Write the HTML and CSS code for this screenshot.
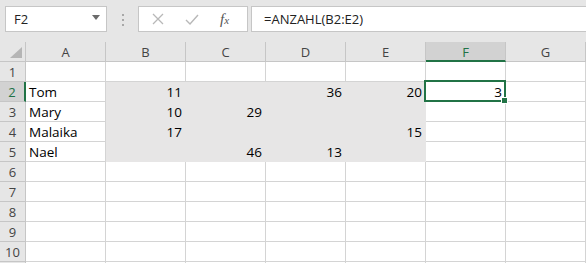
FILE: index.html
```html
<!DOCTYPE html>
<html lang="de">
<head>
    <meta charset="UTF-8">
    <title>ANZAHL</title>
    <link rel="stylesheet" href="styles.css">
</head>
<body>

    <!-- Bearbeitungsleiste -->
    <div class="formula-bar">
        <div class="name-box">
            <span>F2</span>
            <svg class="drop" width="8" height="5" viewBox="0 0 8 5"><path d="M0 0H8L4 5Z" fill="#6b6b6b"/></svg>
        </div>
        <div class="grip"><i></i><i></i><i></i></div>
        <div class="fx-buttons">
            <svg width="12" height="12" viewBox="0 0 12 12"><path d="M1 1L11 11M11 1L1 11" stroke="#b8b8b8" stroke-width="1.3" fill="none"/></svg>
            <svg width="14" height="11" viewBox="0 0 14 11"><path d="M1 6L5 10L13 1" stroke="#b8b8b8" stroke-width="1.4" fill="none"/></svg>
            <span class="fx">f<sub>x</sub></span>
        </div>
        <div class="formula">=ANZAHL(B2:E2)</div>
    </div>

    <!-- Tabellenblatt -->
    <div class="sheet">
        <div class="row head">
            <div class="rh corner">
                <svg width="12" height="11" viewBox="0 0 12 11"><path d="M12 0V11H0Z" fill="#b5b5b5"/></svg>
            </div>
            <div class="c">A</div>
            <div class="c">B</div>
            <div class="c">C</div>
            <div class="c">D</div>
            <div class="c">E</div>
            <div class="c sel">F</div>
            <div class="c">G</div>
        </div>
        <div class="row">
            <div class="rh">1</div>
            <div class="c"></div><div class="c"></div><div class="c"></div><div class="c"></div><div class="c"></div><div class="c"></div><div class="c"></div>
        </div>
        <div class="row">
            <div class="rh sel">2</div>
            <div class="c">Tom</div>
            <div class="c fill num">11</div>
            <div class="c fill num"></div>
            <div class="c fill num">36</div>
            <div class="c fill num">20</div>
            <div class="c num active">3<span class="handle"></span></div>
            <div class="c"></div>
        </div>
        <div class="row">
            <div class="rh">3</div>
            <div class="c">Mary</div>
            <div class="c fill num">10</div>
            <div class="c fill num">29</div>
            <div class="c fill num"></div>
            <div class="c fill num"></div>
            <div class="c"></div>
            <div class="c"></div>
        </div>
        <div class="row">
            <div class="rh">4</div>
            <div class="c">Malaika</div>
            <div class="c fill num">17</div>
            <div class="c fill num"></div>
            <div class="c fill num"></div>
            <div class="c fill num">15</div>
            <div class="c"></div>
            <div class="c"></div>
        </div>
        <div class="row">
            <div class="rh">5</div>
            <div class="c">Nael</div>
            <div class="c fill num"></div>
            <div class="c fill num">46</div>
            <div class="c fill num">13</div>
            <div class="c fill num"></div>
            <div class="c"></div>
            <div class="c"></div>
        </div>
        <div class="row">
            <div class="rh">6</div>
            <div class="c"></div><div class="c"></div><div class="c"></div><div class="c"></div><div class="c"></div><div class="c"></div><div class="c"></div>
        </div>
        <div class="row">
            <div class="rh">7</div>
            <div class="c"></div><div class="c"></div><div class="c"></div><div class="c"></div><div class="c"></div><div class="c"></div><div class="c"></div>
        </div>
        <div class="row">
            <div class="rh">8</div>
            <div class="c"></div><div class="c"></div><div class="c"></div><div class="c"></div><div class="c"></div><div class="c"></div><div class="c"></div>
        </div>
        <div class="row">
            <div class="rh">9</div>
            <div class="c"></div><div class="c"></div><div class="c"></div><div class="c"></div><div class="c"></div><div class="c"></div><div class="c"></div>
        </div>
        <div class="row">
            <div class="rh">10</div>
            <div class="c"></div><div class="c"></div><div class="c"></div><div class="c"></div><div class="c"></div><div class="c"></div><div class="c"></div>
        </div>
        <div class="row">
            <div class="rh"></div>
            <div class="c"></div><div class="c"></div><div class="c"></div><div class="c"></div><div class="c"></div><div class="c"></div><div class="c"></div>
        </div>
    </div>

</body>
</html>
```

FILE: styles.css
```css
/* Grundlayout */
body {
    margin: 0;
    width: 586px;
    height: 263px;
    overflow: hidden;
    background-color: #ffffff;
    font-family: "Open Sans", Arial, sans-serif;
}

/* Bearbeitungsleiste */
.formula-bar {
    display: flex;
    height: 42px;
    box-sizing: border-box;
    padding: 6px 0 0 5px;
    background-color: #e6e6e6;
}

.name-box {
    display: flex;
    align-items: center;
    justify-content: space-between;
    box-sizing: border-box;
    width: 102px;
    height: 26px;
    padding: 0 6px 0 8px;
    background-color: #ffffff;
    border: 1px solid #c6c6c6;
    font-size: 13px;
    color: #222;
}

.name-box .drop {
    margin-top: -3px;
}

.grip {
    display: flex;
    flex-direction: column;
    align-items: center;
    gap: 3px;
    width: 31px;
    padding-top: 8px;
    box-sizing: border-box;
}

.grip i {
    display: block;
    width: 2px;
    height: 2px;
    background-color: #a8a8a8;
}

.fx-buttons {
    display: flex;
    align-items: center;
    box-sizing: border-box;
    width: 110px;
    height: 26px;
    padding: 0 0 0 13px;
    gap: 21px;
    background-color: #ffffff;
    border: 1px solid #c6c6c6;
}

.fx {
    font-family: "Liberation Serif", serif;
    font-style: italic;
    font-size: 15px;
    color: #555;
}

.fx sub {
    font-size: 11px;
    vertical-align: 0;
}

.formula {
    flex: 1;
    box-sizing: border-box;
    height: 26px;
    margin-left: 3px;
    padding: 3px 0 0 12px;
    background-color: #ffffff;
    border: 1px solid #c6c6c6;
    border-right: none;
    font-size: 13px;
    color: #222;
}

/* Tabellenblatt */
.row {
    display: flex;
    height: 20px;
}

.c,
.rh {
    box-sizing: border-box;
    height: 20px;
    border-right: 1px solid #d4d4d4;
    border-bottom: 1px solid #d4d4d4;
    line-height: 20px;
    font-size: 13.5px;
    color: #000;
    white-space: nowrap;
}

.c {
    width: 80px;
    padding: 0 3px;
}

.rh {
    width: 26px;
    text-align: center;
    background-color: #e6e6e6;
    border-color: #c6c6c6;
    font-size: 13px;
    color: #444;
}

.head .c {
    text-align: center;
    background-color: #e6e6e6;
    border-color: #c6c6c6;
    font-size: 13px;
    color: #444;
}

.num {
    text-align: right;
}

/* grau hinterlegter Bereich B2:E5 */
.fill {
    background-color: #e7e6e6;
    border-color: #e7e6e6;
}

.corner {
    position: relative;
}

.corner svg {
    position: absolute;
    right: 3px;
    bottom: 3px;
}

/* Auswahl */
.head .sel {
    background-color: #d2d2d2;
    border-bottom: 2px solid #217346;
    color: #217346;
}

.rh.sel {
    background-color: #d2d2d2;
    border-right: 2px solid #217346;
    color: #217346;
}

.active {
    position: relative;
}

.active::after {
    content: "";
    position: absolute;
    top: -2px;
    left: -2px;
    right: -1px;
    bottom: -1px;
    border: 2px solid #217346;
}

.handle {
    position: absolute;
    right: -3px;
    bottom: -3px;
    width: 5px;
    height: 5px;
    background-color: #217346;
    border: 1px solid #ffffff;
    z-index: 1;
}
```
